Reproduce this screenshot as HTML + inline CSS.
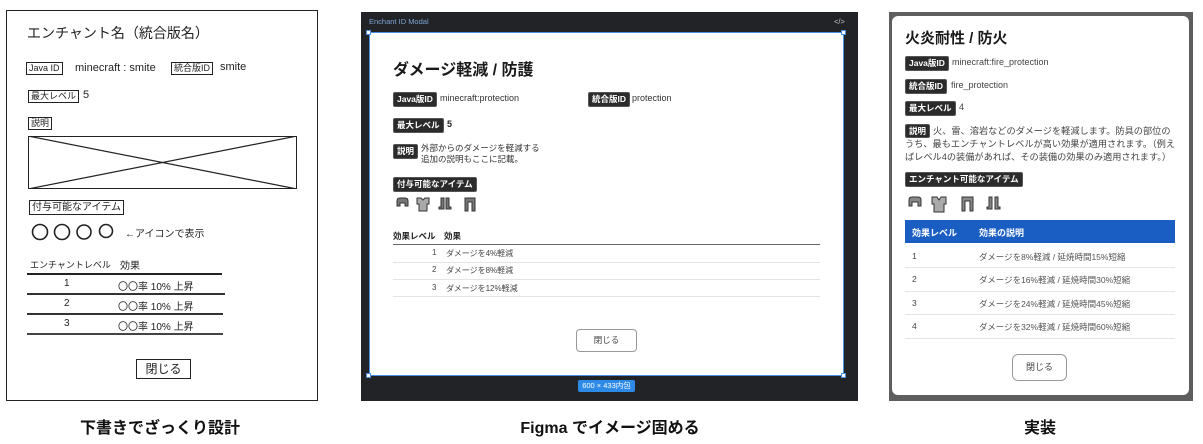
<!DOCTYPE html>
<html><head><meta charset="utf-8">
<style>
*{margin:0;padding:0;box-sizing:border-box}
body{width:1203px;height:444px;background:#fff;position:relative;overflow:hidden;font-family:"Liberation Sans","Noto Sans CJK JP",sans-serif;color:#222}
.a{position:absolute;white-space:nowrap}
.sk{border:1.5px solid #222}
.hb{border:1.3px solid #222;font-size:9px;line-height:11px;padding:0 2px}
.bd{background:#2b2b2b;color:#fff;font-weight:bold;border-radius:2px;font-size:8.5px;line-height:13px;padding:0 3px;border:1px solid #555}
.cap{font-size:16px;font-weight:bold;color:#111;text-align:center}
.ln{position:absolute;height:1px}
svg.i{position:absolute}
</style></head><body>

<!-- LEFT SKETCH -->
<div class="a sk" style="left:6px;top:10px;width:312px;height:391px"></div>
<div class="a" style="left:27px;top:23px;font-size:14px">エンチャント名（統合版名）</div>
<div class="a hb" style="left:26px;top:62px">Java ID</div>
<div class="a" style="left:75px;top:62px;font-size:11px">minecraft : smite</div>
<div class="a hb" style="left:171px;top:62px">統合版ID</div>
<div class="a" style="left:220px;top:61px;font-size:11px">smite</div>
<div class="a hb" style="left:28px;top:90px">最大レベル</div>
<div class="a" style="left:83px;top:89px;font-size:11px">5</div>
<div class="a hb" style="left:28px;top:117px">説明</div>
<div class="a" style="left:28px;top:136px;width:269px;height:53px;border:1.5px solid #222"></div>
<svg class="i" style="left:28px;top:136px" width="269" height="53"><line x1="0" y1="0" x2="269" y2="53" stroke="#222" stroke-width="1.2"/><line x1="0" y1="53" x2="269" y2="0" stroke="#222" stroke-width="1.2"/></svg>
<div class="a hb" style="left:29px;top:200px;font-size:10px;line-height:13px">付与可能なアイテム</div>
<svg class="i" style="left:30px;top:222px" width="90" height="20" fill="none" stroke="#222" stroke-width="1.6"><circle cx="10" cy="10" r="7.5"/><circle cx="32" cy="10" r="7.5"/><circle cx="54" cy="10" r="7"/><circle cx="76" cy="9" r="6.5"/></svg>
<div class="a" style="left:125px;top:225px;font-size:10px">←アイコンで表示</div>
<div class="a" style="left:30px;top:258px;font-size:9px">エンチャントレベル</div>
<div class="a" style="left:120px;top:257px;font-size:10px">効果</div>
<div class="ln" style="left:27px;top:273px;width:195px;background:#222;height:1.5px"></div>
<div class="ln" style="left:27px;top:293px;width:198px;background:#333;height:1.5px"></div>
<div class="ln" style="left:27px;top:313px;width:196px;background:#333;height:1.5px"></div>
<div class="ln" style="left:27px;top:333px;width:196px;background:#444;height:1.5px"></div>
<div class="a" style="left:64px;top:278px;font-size:10px">1</div>
<div class="a" style="left:64px;top:298px;font-size:10px">2</div>
<div class="a" style="left:64px;top:318px;font-size:10px">3</div>
<div class="a" style="left:118px;top:278px;font-size:10px">〇〇率 10% 上昇</div>
<div class="a" style="left:118px;top:298px;font-size:10px">〇〇率 10% 上昇</div>
<div class="a" style="left:118px;top:318px;font-size:10px">〇〇率 10% 上昇</div>
<div class="a" style="left:136px;top:359px;width:55px;height:20px;border:1.5px solid #222;font-size:12px;text-align:center;line-height:18px">閉じる</div>
<div class="a cap" style="left:60px;top:414px;width:200px">下書きでざっくり設計</div>

<!-- MIDDLE FIGMA -->
<div class="a" style="left:361px;top:12px;width:497px;height:389px;background:#222326"></div>
<div class="a" style="left:369px;top:17px;font-size:7.5px;color:#7fa6d8">Enchant ID Modal</div>
<div class="a" style="left:834px;top:17px;font-size:7.5px;color:#ccc">&lt;/&gt;</div>
<div class="a" style="left:369px;top:32px;width:475px;height:344px;background:#fff;border:1px solid #4a90e2"></div>
<div class="a" style="left:366px;top:30px;width:5px;height:5px;background:#fff;border:1px solid #4a90e2"></div>
<div class="a" style="left:841px;top:30px;width:5px;height:5px;background:#fff;border:1px solid #4a90e2"></div>
<div class="a" style="left:366px;top:373px;width:5px;height:5px;background:#fff;border:1px solid #4a90e2"></div>
<div class="a" style="left:841px;top:373px;width:5px;height:5px;background:#fff;border:1px solid #4a90e2"></div>
<div class="a" style="left:578px;top:380px;width:57px;height:12px;background:#2d8ae6;border-radius:2px;color:#fff;font-size:7.5px;line-height:12px;text-align:center">600 × 433内包</div>
<div class="a" style="left:393px;top:56px;font-size:16px;font-weight:bold;color:#1a1a1a">ダメージ軽減 / 防護</div>
<div class="a bd" style="left:393px;top:92px">Java版ID</div>
<div class="a" style="left:440px;top:93px;font-size:9px;color:#333">minecraft:protection</div>
<div class="a bd" style="left:588px;top:92px">統合版ID</div>
<div class="a" style="left:632px;top:93px;font-size:9px;color:#333">protection</div>
<div class="a bd" style="left:393px;top:118px">最大レベル</div>
<div class="a" style="left:447px;top:119px;font-size:9px;font-weight:bold">5</div>
<div class="a bd" style="left:393px;top:144px">説明</div>
<div class="a" style="left:421px;top:143px;font-size:8.5px;line-height:10.5px;color:#333">外部からのダメージを軽減する<br>追加の説明もここに記載。</div>
<div class="a bd" style="left:393px;top:177px">付与可能なアイテム</div>
<svg class="i" style="left:395px;top:196px" width="85" height="17">
<g fill="#777" stroke="#333" stroke-width="1">
<path d="M2 10 V5 Q2 2 5 2 H10 Q13 2 13 5 V10 H10 V7 H5 V10 Z"/>
<path d="M22 2 H26 L28 4 L30 2 H34 V8 L32 8 V15 H24 V8 L22 8 Z" fill="#aaa"/>
<path d="M46 2 H49 V13 H44 V11 H46 Z M51 2 H54 V11 H56 V13 H51 Z"/>
<path d="M70 15 V2 H80 V15 H77 V6 H73 V15 Z"/>
</g></svg>
<div class="a" style="left:393px;top:230px;font-size:8.5px;font-weight:bold">効果レベル</div>
<div class="a" style="left:444px;top:230px;font-size:8.5px;font-weight:bold">効果</div>
<div class="ln" style="left:393px;top:244px;width:427px;background:#666"></div>
<div class="ln" style="left:393px;top:262px;width:427px;background:#e4e4e4"></div>
<div class="ln" style="left:393px;top:279px;width:427px;background:#e4e4e4"></div>
<div class="ln" style="left:393px;top:296px;width:427px;background:#e4e4e4"></div>
<div class="a" style="left:432px;top:248px;font-size:8px;color:#444">1</div>
<div class="a" style="left:432px;top:265px;font-size:8px;color:#444">2</div>
<div class="a" style="left:432px;top:283px;font-size:8px;color:#444">3</div>
<div class="a" style="left:446px;top:248px;font-size:8px;color:#444">ダメージを4%軽減</div>
<div class="a" style="left:446px;top:265px;font-size:8px;color:#444">ダメージを8%軽減</div>
<div class="a" style="left:446px;top:283px;font-size:8px;color:#444">ダメージを12%軽減</div>
<div class="a" style="left:576px;top:329px;width:61px;height:23px;border:1px solid #999;border-radius:4px;font-size:8.5px;color:#444;text-align:center;line-height:21px">閉じる</div>
<div class="a cap" style="left:490px;top:414px;width:240px">Figma でイメージ固める</div>

<!-- RIGHT IMPLEMENTATION -->
<div class="a" style="left:889px;top:12px;width:304px;height:389px;background:#5e5e5e"></div>
<div class="a" style="left:892px;top:16px;width:297px;height:379px;background:#fff;border-radius:6px"></div>
<div class="a" style="left:905px;top:27px;font-size:15px;font-weight:bold;color:#1a1a1a">火炎耐性 / 防火</div>
<div class="a bd" style="left:905px;top:56px">Java版ID</div>
<div class="a" style="left:952px;top:57px;font-size:9px;color:#444">minecraft:fire_protection</div>
<div class="a bd" style="left:905px;top:79px">統合版ID</div>
<div class="a" style="left:951px;top:80px;font-size:9px;color:#444">fire_protection</div>
<div class="a bd" style="left:905px;top:101px">最大レベル</div>
<div class="a" style="left:959px;top:102px;font-size:9px;color:#444">4</div>
<div class="a" style="left:905px;top:124px;width:270px;white-space:normal;font-size:9.2px;line-height:12.5px;color:#444"><span class="bd" style="display:inline-block;line-height:12px;margin-right:3px">説明</span>火、雷、溶岩などのダメージを軽減します。防具の部位のうち、最もエンチャントレベルが高い効果が適用されます。（例えばレベル4の装備があれば、その装備の効果のみ適用されます。）</div>
<div class="a bd" style="left:905px;top:172px">エンチャント可能なアイテム</div>
<svg class="i" style="left:907px;top:195px" width="100" height="18">
<g fill="#888" stroke="#333" stroke-width="1">
<path d="M2 11 V5 Q2 2 5 2 H11 Q14 2 14 5 V11 H11 V7 H5 V11 Z"/>
<path d="M25 2 H30 L32 5 L34 2 H39 V9 L37 9 V17 H27 V9 L25 9 Z" fill="#aaa"/>
<path d="M55 16 V2 H66 V16 H63 V6 H58 V16 Z"/>
<path d="M82 2 H85 V14 H80 V12 H82 Z M88 2 H91 V12 H93 V14 H88 Z"/>
</g></svg>
<div class="a" style="left:905px;top:220px;width:270px;height:23px;background:#1a5ec4"></div>
<div class="a" style="left:912px;top:226px;font-size:9px;font-weight:bold;color:#fff">効果レベル</div>
<div class="a" style="left:979px;top:226px;font-size:9px;font-weight:bold;color:#fff">効果の説明</div>
<div class="ln" style="left:905px;top:267px;width:270px;background:#e4e4e4"></div>
<div class="ln" style="left:905px;top:291px;width:270px;background:#e4e4e4"></div>
<div class="ln" style="left:905px;top:314px;width:270px;background:#e4e4e4"></div>
<div class="ln" style="left:905px;top:338px;width:270px;background:#e4e4e4"></div>
<div class="a" style="left:912px;top:251px;font-size:8.5px;color:#444">1</div>
<div class="a" style="left:912px;top:274px;font-size:8.5px;color:#444">2</div>
<div class="a" style="left:912px;top:298px;font-size:8.5px;color:#444">3</div>
<div class="a" style="left:912px;top:321px;font-size:8.5px;color:#444">4</div>
<div class="a" style="left:979px;top:251px;font-size:8.5px;color:#555">ダメージを8%軽減 / 延焼時間15%短縮</div>
<div class="a" style="left:979px;top:274px;font-size:8.5px;color:#555">ダメージを16%軽減 / 延焼時間30%短縮</div>
<div class="a" style="left:979px;top:298px;font-size:8.5px;color:#555">ダメージを24%軽減 / 延焼時間45%短縮</div>
<div class="a" style="left:979px;top:321px;font-size:8.5px;color:#555">ダメージを32%軽減 / 延焼時間60%短縮</div>
<div class="a" style="left:1012px;top:354px;width:55px;height:27px;border:1px solid #999;border-radius:6px;font-size:9px;color:#444;text-align:center;line-height:25px">閉じる</div>
<div class="a cap" style="left:1000px;top:414px;width:80px">実装</div>
</body></html>
